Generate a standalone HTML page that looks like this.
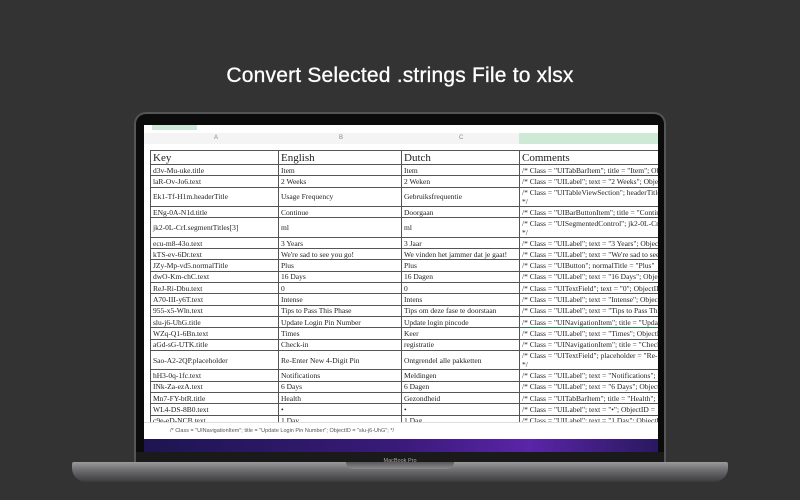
<!DOCTYPE html>
<html><head><style>
*{margin:0;padding:0;box-sizing:border-box}
body{width:800px;height:500px;background:#333334;position:relative;overflow:hidden;font-family:"Liberation Serif",serif}
.title{position:absolute;top:64px;left:0;width:800px;text-align:center;color:#fff;font:500 21px "Liberation Sans",sans-serif;letter-spacing:0.2px;-webkit-text-stroke:0.3px #fff}
.lid{position:absolute;left:134px;top:112px;width:532px;height:352px;background:#0b0b0c;border:2px solid #555;border-radius:12px 12px 0 0;border-bottom:none}
.screen{position:absolute;left:144px;top:125px;width:514px;height:327px;background:#fff;overflow:hidden}
.colh{position:absolute;left:0;top:8px;width:514px;height:11px;background:#f4f4f4;font:6px "Liberation Sans",sans-serif;color:#888}
.colh span{position:absolute;top:2px}
table{position:absolute;left:6px;top:25px;border-collapse:collapse;font-size:7.5px;color:#222;table-layout:fixed;width:520px}
td{border:1px solid #555;padding:0 2px;height:11.3px;white-space:nowrap;overflow:hidden;line-height:9px}
tr.h td{height:14px;font-size:11px;line-height:12px}
tr.t td{height:19.5px}
.fb{position:absolute;left:0;top:297px;width:514px;height:17px;background:#fff;border-top:1px solid #ddd;font:5.5px "Liberation Sans",sans-serif;color:#555;padding:5px 0 0 26px}
.purple{position:absolute;left:0;top:314px;width:514px;height:13px;background:linear-gradient(90deg,#1d1550,#3a1a7a 50%,#5a25a8 75%,#2a1860)}
.chin{position:absolute;left:136px;top:452px;width:528px;height:10px;background:#1a1a1b;color:#aaa;font:5.5px "Liberation Sans",sans-serif;text-align:center;line-height:19px}
.base{position:absolute;left:72px;top:462px;width:656px;height:20px;background:linear-gradient(#9a9a9c,#6e6e70 40%,#3b3b3d);border-radius:2px 2px 14px 14px}
.notch{position:absolute;left:346px;top:462px;width:108px;height:7px;background:linear-gradient(#5a5a5c,#8a8a8c);border-radius:0 0 7px 7px}
</style></head><body>
<div class="title">Convert Selected .strings File to xlsx</div>
<div class="lid"></div>
<div class="screen">
<div style="position:absolute;left:8px;top:0;width:45px;height:5px;background:#cfe9d7"></div>
<div class="colh"><span style="left:70px">A</span><span style="left:195px">B</span><span style="left:315px">C</span><div style="position:absolute;left:375px;top:0;width:139px;height:11px;background:#cfe9d7"></div></div>
<table>
<colgroup><col style="width:128px"><col style="width:123px"><col style="width:118px"><col style="width:151px"></colgroup>
<tr class="h"><td>Key</td><td>English</td><td>Dutch</td><td>Comments</td></tr>
<tr><td>d3v-Mu-uke.title</td><td>Item</td><td>Item</td><td>/* Class = "UITabBarItem"; title = "Item"; ObjectID</td></tr>
<tr><td>laR-Ov-Jo6.text</td><td>2 Weeks</td><td>2 Weken</td><td>/* Class = "UILabel"; text = "2 Weeks"; ObjectID</td></tr>
<tr class="t"><td>Ek1-Tf-H1m.headerTitle</td><td>Usage Frequency</td><td>Gebruiksfrequentie</td><td>/* Class = "UITableViewSection"; headerTitle<br>*/</td></tr>
<tr><td>ENg-0A-N1d.title</td><td>Continue</td><td>Doorgaan</td><td>/* Class = "UIBarButtonItem"; title = "Continue"</td></tr>
<tr class="t"><td>jk2-0L-CrI.segmentTitles[3]</td><td>ml</td><td>ml</td><td>/* Class = "UISegmentedControl"; jk2-0L-CrI<br>*/</td></tr>
<tr><td>ecu-m8-43o.text</td><td>3 Years</td><td>3 Jaar</td><td>/* Class = "UILabel"; text = "3 Years"; ObjectID</td></tr>
<tr><td>kTS-ev-6Dr.text</td><td>We're sad to see you go!</td><td>We vinden het jammer dat je gaat!</td><td>/* Class = "UILabel"; text = "We're sad to see</td></tr>
<tr><td>JZy-Mp-vd5.normalTitle</td><td>Plus</td><td>Plus</td><td>/* Class = "UIButton"; normalTitle = "Plus"</td></tr>
<tr><td>dwO-Km-chC.text</td><td>16 Days</td><td>16 Dagen</td><td>/* Class = "UILabel"; text = "16 Days"; ObjectID</td></tr>
<tr><td>ReJ-Ri-Dbu.text</td><td>0</td><td>0</td><td>/* Class = "UITextField"; text = "0"; ObjectID</td></tr>
<tr><td>A70-III-y6T.text</td><td>Intense</td><td>Intens</td><td>/* Class = "UILabel"; text = "Intense"; Object</td></tr>
<tr><td>955-x5-Wln.text</td><td>Tips to Pass This Phase</td><td>Tips om deze fase te doorstaan</td><td>/* Class = "UILabel"; text = "Tips to Pass This</td></tr>
<tr><td>slu-j6-UhG.title</td><td>Update Login Pin Number</td><td>Update login pincode</td><td style="border:1px solid #2a7a4a">/* Class = "UINavigationItem"; title = "Update</td></tr>
<tr><td>WZq-Q1-6Bn.text</td><td>Times</td><td>Keer</td><td>/* Class = "UILabel"; text = "Times"; ObjectID</td></tr>
<tr><td>aGd-sG-UTK.title</td><td>Check-in</td><td>registratie</td><td>/* Class = "UINavigationItem"; title = "Check</td></tr>
<tr class="t"><td>Sao-A2-2QP.placeholder</td><td>Re-Enter New 4-Digit Pin</td><td>Ontgrendel alle pakketten</td><td>/* Class = "UITextField"; placeholder = "Re-<br>*/</td></tr>
<tr><td>hH3-0q-1fc.text</td><td>Notifications</td><td>Meldingen</td><td>/* Class = "UILabel"; text = "Notifications";</td></tr>
<tr><td>INk-Za-ezA.text</td><td>6 Days</td><td>6 Dagen</td><td>/* Class = "UILabel"; text = "6 Days"; Object</td></tr>
<tr><td>Mn7-FY-btR.title</td><td>Health</td><td>Gezondheid</td><td>/* Class = "UITabBarItem"; title = "Health";</td></tr>
<tr><td>WL4-DS-8B0.text</td><td>•</td><td>•</td><td>/* Class = "UILabel"; text = "•"; ObjectID =</td></tr>
<tr><td>c9e-eD-NCB.text</td><td>1 Day</td><td>1 Dag</td><td>/* Class = "UILabel"; text = "1 Day"; ObjectID</td></tr>
</table>
<div class="fb">/* Class = "UINavigationItem"; title = "Update Login Pin Number"; ObjectID = "slu-j6-UhG"; */</div>
<div class="purple"></div>
</div>
<div class="chin">MacBook Pro</div>
<div class="base"></div>
<div class="notch"></div>
</body></html>
